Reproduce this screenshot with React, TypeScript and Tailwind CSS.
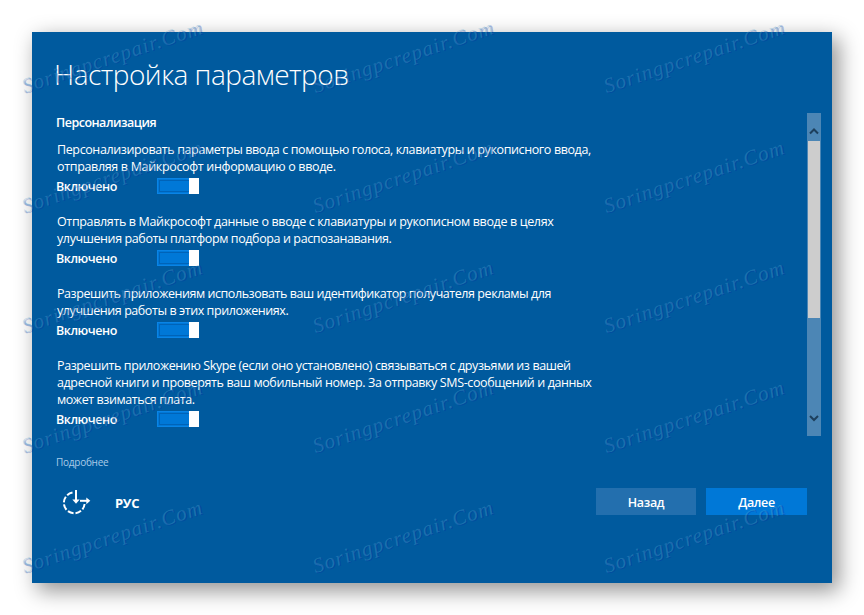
import React from "react";
import cx from "clsx";

interface Line {
  text: string;
  tracking: string;
}

interface Setting {
  id: string;
  lines: Array<Line>;
}

const settings: Array<Setting> = [
  {
    id: "input",
    lines: [
      {
        text: "Персонализировать параметры ввода с помощью голоса, клавиатуры и рукописного ввода,",
        tracking: "tracking-[-0.38px]",
      },
      {
        text: "отправляя в Майкрософт информацию о вводе.",
        tracking: "tracking-[-0.33px]",
      },
    ],
  },
  {
    id: "typing",
    lines: [
      {
        text: "Отправлять в Майкрософт данные о вводе с клавиатуры и рукописном вводе в целях",
        tracking: "tracking-[-0.35px]",
      },
      {
        text: "улучшения работы платформ подбора и распозанавания.",
        tracking: "tracking-[-0.39px]",
      },
    ],
  },
  {
    id: "ads",
    lines: [
      {
        text: "Разрешить приложениям использовать ваш идентификатор получателя рекламы для",
        tracking: "tracking-[-0.44px]",
      },
      {
        text: "улучшения работы в этих приложениях.",
        tracking: "tracking-[-0.43px]",
      },
    ],
  },
  {
    id: "skype",
    lines: [
      {
        text: "Разрешить приложению Skype (если оно установлено) связываться с друзьями из вашей",
        tracking: "tracking-[-0.39px]",
      },
      {
        text: "адресной книги и проверять ваш мобильный номер. За отправку SMS-сообщений и данных",
        tracking: "tracking-[-0.38px]",
      },
      {
        text: "может взиматься плата.",
        tracking: "tracking-[-0.41px]",
      },
    ],
  },
];

const Toggle: React.FC = () => (
  <button
    role="switch"
    aria-checked="true"
    aria-label="Включено"
    className="flex h-4 w-[42px] bg-[#0078d7]"
  >
    <span className="h-4 w-8 border border-[#0a84e6] p-px">
      <span className="block h-3 w-[30px] border border-r-0 border-[#0063b8] bg-[#0078d7]"></span>
    </span>
    <span className="h-4 w-[10px] bg-white"></span>
  </button>
);

const SettingRow: React.FC<{ setting: Setting }> = ({ setting }) => (
  <div className="mb-[22px]">
    <div className="pl-px text-[12.5px] leading-[17px]">
      {setting.lines.map((line) => (
        <p key={line.text} className={cx("whitespace-nowrap", line.tracking)}>
          <span>{line.text}</span>
        </p>
      ))}
    </div>
    <div className="flex h-4 pt-[3px]">
      <span className="w-[101px] pt-px text-[12.5px] leading-4 font-semibold tracking-[-0.45px]">
        Включено
      </span>
      <Toggle />
    </div>
  </div>
);

const Scrollbar: React.FC = () => (
  <div className="flex h-[323px] w-[14px] flex-col items-center bg-[#4c86b5] text-[#1d3f5c]">
    <svg width="14" height="28" fill="none" stroke="currentColor" strokeWidth="2">
      <path d="M3 20.5 7 16.5 11 20.5" />
    </svg>
    <div className="h-[177px] w-3 bg-[#cdcdcd]"></div>
    <svg
      className="mt-auto"
      width="14"
      height="28"
      fill="none"
      stroke="currentColor"
      strokeWidth="2"
    >
      <path d="M3 8 7 12 11 8" />
    </svg>
  </div>
);

const EaseOfAccess: React.FC = () => (
  <svg width="30" height="28" viewBox="0 0 30 28" fill="none" stroke="white">
    <path
      d="M10.5 4.6A10.4 10.4 0 1 0 22.6 16"
      strokeWidth="2"
      strokeDasharray="6 2"
    />
    <path d="M14 2V13" strokeWidth="2" />
    <path d="M10.3 11.5H17.7L14 15.7Z" fill="white" stroke="none" />
    <path d="M18 12.8H27" strokeWidth="2" />
    <path d="M24.3 9.4 28.3 12.8 24.3 16.2Z" fill="white" stroke="none" />
  </svg>
);

const columns = [26, 317, 608];
const rows = [98, 218, 338, 458, 578];

const Watermarks: React.FC = () => (
  <div className="pointer-events-none absolute inset-0" aria-hidden="true">
    {rows.map((y) =>
      columns.map((x) => (
        <span
          key={`${x}-${y}`}
          style={{ left: x, top: y - 24 }}
          className="absolute origin-bottom-left rotate-[-18.5deg] font-['Liberation_Serif',serif] text-[21px] leading-6 tracking-[1.1px] whitespace-nowrap text-[#58a8d0]/32 italic [text-shadow:1px_1px_0_rgb(0_40_160/0.28)]"
        >
          Soringpcrepair.Com
        </span>
      ))
    )}
  </div>
);

const App: React.FC = () => {
  return (
    <div className="relative h-[615px] w-[864px] overflow-hidden bg-white p-8 font-['Open_Sans','Noto_Sans',sans-serif] text-white">
      <main className="flex h-[551px] w-[800px] flex-col bg-[#005a9e] pt-[23px] pr-[11px] pl-6 shadow-[6px_7px_20px_1px_rgb(0_0_0/0.42)]">
        <h1 className="-ml-0.5 h-[58px] text-[28px] leading-[38px] font-light tracking-[-0.5px] whitespace-nowrap">
          <span>Настройка параметров</span>
        </h1>
        <div className="flex h-[323px] justify-between">
          <section>
            <h2 className="h-7 pt-px text-[12.5px] leading-[18px] font-semibold tracking-[-0.5px]">
              Персонализация
            </h2>
            {settings.map((s) => (
              <SettingRow setting={s} key={s.id} />
            ))}
          </section>
          <Scrollbar />
        </div>
        <a className="mt-[18px] h-4 text-[10px] leading-4 tracking-[-0.25px] text-[#a9cbe8]">
          Подробнее
        </a>
        <footer className="mt-[18px] flex items-start pr-[14px]">
          <div className="pl-[6px]">
            <EaseOfAccess />
          </div>
          <span className="ml-[23px] pt-[5px] text-[13px] leading-5 font-bold tracking-[-0.3px]">
            РУС
          </span>
          <div className="ml-auto flex gap-[10px] text-[12.5px] font-semibold tracking-[-0.35px]">
            <button className="h-[27px] w-[100px] bg-[#236fae] pt-[3px]">
              Назад
            </button>
            <button className="h-[27px] w-[101px] bg-[#0078d7] pt-[3px]">
              Далее
            </button>
          </div>
        </footer>
      </main>
      <Watermarks />
    </div>
  );
};

export default App;
